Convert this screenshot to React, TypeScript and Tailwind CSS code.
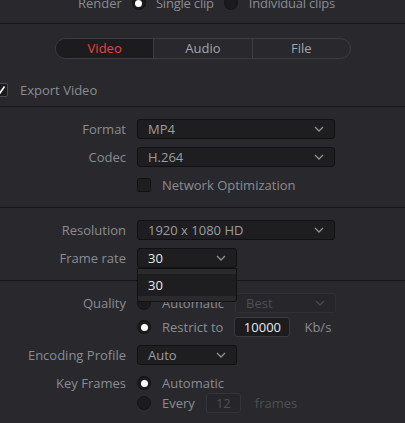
import React from "react";

const Chevron = ({ dim = false }: { dim?: boolean }) => (
  <svg width="10" height="6" viewBox="0 0 10 6" className="shrink-0">
    <path
      d="M1 1 L5 5 L9 1"
      fill="none"
      stroke={dim ? "#4a4b50" : "#8d9095"}
      strokeWidth="1.3"
    />
  </svg>
);

const Radio = ({ on = false }: { on?: boolean }) => (
  <div className="flex h-[14px] w-[14px] shrink-0 items-center justify-center rounded-full border border-[#141416] bg-[#1b1b1d]">
    {on && <div className="h-[7px] w-[7px] rounded-full bg-white" />}
  </div>
);

const Select = ({
  value,
  width,
  bright = false,
  dim = false,
}: {
  value: string;
  width: string;
  bright?: boolean;
  dim?: boolean;
}) => (
  <div
    className={`flex h-5 items-center justify-between rounded-[3px] border pl-[10px] pr-[10px] ${width} ${
      dim ? "border-[#2f3034] bg-[#26262b]" : "border-[#111113] bg-[#1e1e20]"
    }`}
  >
    <span
      className={
        bright ? "text-[#e8e8ea]" : dim ? "text-[#4e5055]" : "text-[#9a9da2]"
      }
    >
      {value}
    </span>
    <Chevron dim={dim} />
  </div>
);

const Row = ({
  label,
  children,
  className = "",
}: {
  label?: string;
  children: React.ReactNode;
  className?: string;
}) => (
  <div className={`flex h-5 items-center ${className}`}>
    <div className="w-[126px] shrink-0 text-right text-[#8a8d92]">{label}</div>
    <div className="ml-[11px] flex items-center">{children}</div>
  </div>
);

const Divider = () => <div className="h-px bg-[#161618]" />;

export default function App() {
  return (
    <div
      className="h-[423px] w-[405px] overflow-hidden bg-[#28282d] text-[13px] leading-none"
      style={{ fontFamily: '"Open Sans", "Noto Sans", sans-serif' }}
    >
      {/* render row, cut off at top */}
      <div className="-mt-[7px] flex h-5 items-center pl-[78px] text-[#8a8d92]">
        <span>Render</span>
        <div className="ml-[10px]">
          <Radio on />
        </div>
        <span className="ml-[10px] tracking-[-0.2px]">Single clip</span>
        <div className="ml-[10px]">
          <Radio />
        </div>
        <span className="ml-[11px] tracking-[-0.2px]">Individual clips</span>
      </div>
      <div className="mt-[10px]">
        <Divider />
      </div>

      <div className="flex flex-col pt-[14px] pb-[6px]">
        <div className="ml-[55px] flex h-[21px] w-[296px] overflow-hidden rounded-full border border-[#3c3c41]">
          <div className="flex flex-1 items-center justify-center bg-[#1c1c1f] text-[#e5473b]">
            Video
          </div>
          <div className="flex flex-1 items-center justify-center border-l border-[#3c3c41] text-[#a3a5aa]">
            Audio
          </div>
          <div className="flex flex-1 items-center justify-center border-l border-[#3c3c41] text-[#a3a5aa]">
            File
          </div>
        </div>
        <div className="mt-[21px] flex h-5 items-center">
          <div className="-ml-[6px] flex h-[14px] w-[14px] items-center justify-center rounded-[2px] border border-[#4a4b50] bg-[#1b1b1d]">
            <svg width="10" height="10" viewBox="0 0 10 10">
              <path d="M2 5.5 L4 8 L8.5 1.5" fill="none" stroke="#ffffff" strokeWidth="1.6" />
            </svg>
          </div>
          <span className="ml-[12px] text-[#8a8d92]">Export Video</span>
        </div>
      </div>
      <Divider />

      <div className="flex flex-col gap-2 pt-[12px] pb-[12px]">
        <Row label="Format">
          <Select value="MP4" width="w-[198px]" />
        </Row>
        <Row label="Codec">
          <Select value="H.264" width="w-[198px]" />
        </Row>
        <Row>
          <div className="h-[14px] w-[14px] rounded-[2px] border border-[#111113] bg-[#1e1e20]" />
          <span className="ml-[11px] text-[#8a8d92]">Network Optimization</span>
        </Row>
      </div>
      <Divider />

      <div className="flex flex-col gap-2 pt-[12px] pb-[12px]">
        <Row label="Resolution">
          <Select value="1920 x 1080 HD" width="w-[198px]" />
        </Row>
        <Row label="Frame rate" className="relative">
          <Select value="30" width="w-[100px]" bright />
          <div className="absolute top-[20px] left-[137px] z-10 flex w-[100px] flex-col rounded-b-[3px] border border-[#111113] bg-[#2a2a2d] py-[5px]">
            <div className="flex h-[22px] items-center bg-[#1e1e20] pl-[10px] text-[#e8e8ea]">
              30
            </div>
          </div>
        </Row>
      </div>
      <Divider />

      <div className="flex flex-col pt-[12px]">
        <Row label="Quality">
          <Radio />
          <span className="ml-[11px] text-[#8a8d92]">Automatic</span>
          <div className="ml-[11px]">
            <Select value="Best" width="w-[101px]" dim />
          </div>
        </Row>
        <Row className="mt-[4px]">
          <Radio on />
          <span className="ml-[11px] text-[#8a8d92]">Restrict to</span>
          <div className="ml-[11px] flex h-5 w-[56px] items-center justify-center rounded-[3px] border border-[#3a3b40] bg-[#1c1c1e] text-[#e8e8ea]">
            10000
          </div>
          <span className="ml-[14px] text-[#8a8d92]">Kb/s</span>
        </Row>
        <Row label="Encoding Profile" className="mt-[8px]">
          <Select value="Auto" width="w-[100px]" />
        </Row>
        <Row label="Key Frames" className="mt-[8px]">
          <Radio on />
          <span className="ml-[11px] text-[#8a8d92]">Automatic</span>
        </Row>
        <Row>
          <Radio />
          <span className="ml-[11px] text-[#8a8d92]">Every</span>
          <div className="ml-[11px] flex h-5 w-[35px] items-center justify-center rounded-[3px] border border-[#34353a] bg-[#26262a] text-[#4e5055]">
            12
          </div>
          <span className="ml-[14px] text-[#4e5055]">frames</span>
        </Row>
      </div>
    </div>
  );
}
